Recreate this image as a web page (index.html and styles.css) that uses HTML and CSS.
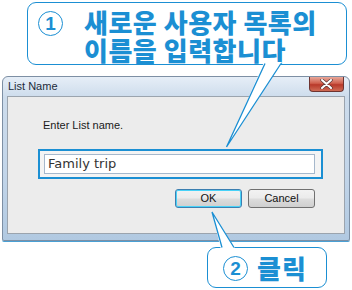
FILE: index.html
```html
<!DOCTYPE html>
<html>
    <head>
        <meta charset="utf-8">
        <title>List Name</title>
        <link rel="stylesheet" href="styles.css">
    </head>
    <body>
        <div class="page">
            <div class="callout callout-top">
                <span class="num">1</span>
                <div class="msg">
                    <div>새로운 사용자 목록의</div>
                    <div>이름을 입력합니다</div>
                </div>
            </div>

            <div class="window">
                <div class="titlebar">
                    <span class="title">List Name</span>
                    <div class="close">
                        <svg width="13" height="10" viewBox="0 0 13 10">
                            <path d="M2 1 L11 9 M11 1 L2 9" stroke="#5a3a3a" stroke-width="3.4" stroke-linecap="round"/>
                            <path d="M2 1 L11 9 M11 1 L2 9" stroke="#fff" stroke-width="2" stroke-linecap="round"/>
                        </svg>
                    </div>
                </div>
                <div class="client">
                    <div class="label">Enter List name.</div>
                    <div class="focus-ring">
                        <div class="input">Family trip</div>
                    </div>
                    <div class="buttons">
                        <div class="btn btn-default">OK</div>
                        <div class="btn">Cancel</div>
                    </div>
                </div>
            </div>

            <div class="callout callout-bottom">
                <span class="num">2</span>
                <div class="msg">클릭</div>
            </div>

            <svg class="tails" width="352" height="290" viewBox="0 0 352 290">
                <polygon points="264,62 282,62 227,147" fill="#fff"/>
                <polyline points="265,63.5 226.5,147 281,63.5" fill="none" stroke="#1b8fd3" stroke-width="1.3"/>
                <polygon points="221,250 236,250 212,212" fill="#fff"/>
                <polyline points="222,247.5 212,212 234,247.5" fill="none" stroke="#1b8fd3" stroke-width="1.3"/>
            </svg>
        </div>
    </body>
</html>
```

FILE: styles.css
```css
*{
    box-sizing: border-box;
}
body{
    margin: 0;
    background: #fff;
}
.page{
    position: relative;
    width: 352px;
    height: 290px;
    overflow: hidden;
    display: flex;
    flex-direction: column;
}
.callout{
    display: flex;
    align-items: flex-start;
    background: #fff;
    border: 1.3px solid #1b8fd3;
    border-radius: 9px;
    color: #1b8fd3;
    font-family: "Noto Sans CJK KR", sans-serif;
    font-weight: 900;
}
.callout-top{
    margin: 2px 0 0 27px;
    width: 320px;
    height: 63px;
    padding: 5px 0 0 10px;
}
.callout-top .msg{
    display: flex;
    flex-direction: column;
    font-size: 26px;
    line-height: 28px;
    letter-spacing: 0.5px;
    margin-left: 21px;
}
.num{
    display: flex;
    justify-content: center;
    align-items: center;
    width: 25px;
    height: 25px;
    margin-top: 3px;
    border: 1.3px solid #1b8fd3;
    border-radius: 50%;
    font-family: "Liberation Sans", sans-serif;
    font-weight: 700;
    font-size: 19px;
}
.callout-bottom{
    margin: 6px 0 0 207px;
    width: 120px;
    height: 41px;
    padding: 6px 0 0 15px;
}
.callout-bottom .msg{
    font-size: 26px;
    line-height: 28px;
    margin-left: 9px;
    letter-spacing: 1px;
}
.callout-bottom .num{
    margin-top: 2px;
}
.window{
    margin: 11px 0 0 2px;
    width: 348px;
    height: 165px;
    border: 1px solid #7d8fa4;
    border-radius: 6px 6px 2px 2px;
    background: linear-gradient(180deg, #e6eef7 0px, #cddcec 20px, #c2d5e9 60%, #b1c9e1 100%);
    display: flex;
    flex-direction: column;
    box-shadow: 0 1px 0 #4aa0d4;
}
.titlebar{
    height: 19px;
    display: flex;
    justify-content: space-between;
    align-items: flex-start;
    padding-left: 5px;
}
.title{
    font-family: "Liberation Sans", sans-serif;
    font-size: 11px;
    color: #1c2b3a;
    margin-top: 3px;
}
.close{
    width: 35px;
    height: 15px;
    margin-right: 5px;
    border: 1px solid #6e3430;
    border-top: none;
    border-radius: 0 0 4px 4px;
    background: linear-gradient(180deg, #e8a89a 0%, #cf5f4d 45%, #b8392a 55%, #cf6b55 100%);
    display: flex;
    justify-content: center;
    align-items: center;
}
.client{
    margin: 0 4px 0 4px;
    flex: 1;
    margin-bottom: 6px;
    background: #ececec;
    border: 1px solid #9ba4ae;
    padding: 22px 0 0 30px;
}
.label{
    font-family: "Liberation Sans", sans-serif;
    font-size: 11px;
    color: #1a1a1a;
    height: 30px;
    margin-left: 5px;
}
.focus-ring{
    width: 285px;
    height: 30px;
    border: 2px solid #1b8fd3;
    padding: 3px 6px 3px 4px;
    background: #f4f4f4;
}
.input{
    height: 20px;
    background: #fff;
    border: 1px solid #a6b8cc;
    font-family: "DejaVu Sans", sans-serif;
    font-size: 13px;
    line-height: 18px;
    color: #333;
    padding-left: 3px;
}
.buttons{
    display: flex;
    gap: 6px;
    margin: 10px 0 0 137px;
}
.btn{
    width: 67px;
    height: 19px;
    border: 1px solid #707070;
    border-radius: 3px;
    background: linear-gradient(180deg, #f2f2f2 0%, #ebebeb 48%, #dddddd 52%, #cfcfcf 100%);
    font-family: "Liberation Sans", sans-serif;
    font-size: 11px;
    line-height: 17px;
    text-align: center;
    color: #111;
}
.btn-default{
    border-color: #3c7fb1;
    box-shadow: inset 0 0 0 1px #48d2f8;
}
.tails{
    position: absolute;
    left: 0;
    top: 0;
}
```
